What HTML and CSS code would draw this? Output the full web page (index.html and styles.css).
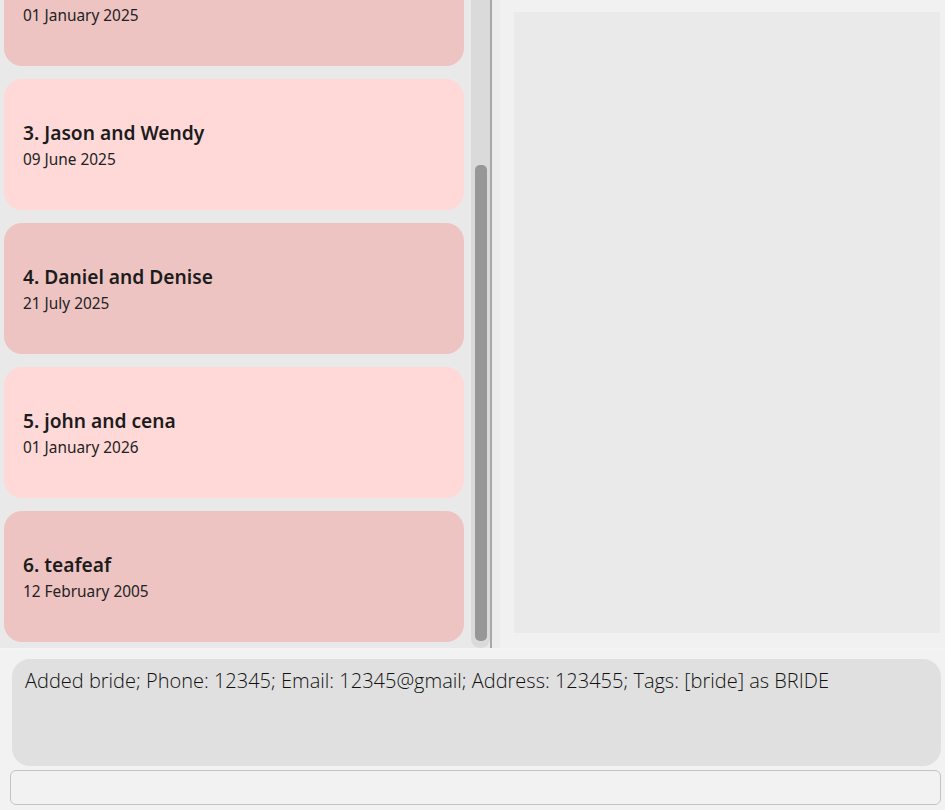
FILE: index.html
```html
<!DOCTYPE html>
<html>
<head>
<meta charset="utf-8">
<link rel="stylesheet" href="styles.css">
</head>
<body>
<div class="app">
  <div class="top">
    <div class="list-panel">
      <div class="list">
        <div class="cards">
          <div class="card dark"><div class="title"></div><div class="date">01 January 2025</div></div>
          <div class="card light"><div class="title">3. Jason and Wendy</div><div class="date">09 June 2025</div></div>
          <div class="card dark"><div class="title">4. Daniel and Denise</div><div class="date">21 July 2025</div></div>
          <div class="card light"><div class="title">5. john and cena</div><div class="date">01 January 2026</div></div>
          <div class="card dark"><div class="title">6. teafeaf</div><div class="date">12 February 2005</div></div>
        </div>
      </div>
      <div class="track"><div class="thumb"></div></div>
    </div>
    <div class="divider"></div>
    <div class="gutter"></div>
    <div class="detail-panel">
      <div class="detail-box"></div>
    </div>
  </div>
  <div class="result-wrap">
    <div class="result">Added bride; Phone: 12345; Email: 12345@gmail; Address: 123455; Tags: [bride] as BRIDE</div>
  </div>
  <div class="command-wrap">
    <div class="command"></div>
  </div>
</div>
</body>
</html>
```
FILE: styles.css
```css
* { box-sizing: border-box; }
html, body { margin: 0; padding: 0; }
body {
  background: #f2f2f2;
  font-family: "Noto Sans", "Open Sans", sans-serif;
  color: #1f1f1f;
  width: 945px;
  height: 810px;
  overflow: hidden;
}
.app { display: flex; flex-direction: column; height: 810px; }
.top { display: flex; height: 648px; }
.list-panel {
  width: 490px;
  background: #e9e9e9;
  display: flex;
  overflow: hidden;
}
.list { width: 471px; overflow: hidden; }
.cards { margin-top: -65px; padding-left: 4px; }
.card {
  width: 460px;
  height: 131px;
  border-radius: 18px;
  margin-bottom: 13px;
  padding: 41px 0 0 19px;
}
.card.dark { background: #eec4c2; }
.card.light { background: #ffd9d8; }
.title {
  font-size: 19.2px;
  font-weight: 600;
  line-height: 26px;
  height: 26px;
  color: #1c1c1c;
}
.date {
  font-size: 15.4px;
  line-height: 20px;
  margin-top: 4px;
  color: #222;
}
.track {
  width: 19px;
  height: 648px;
  background: #dadada;
  border-radius: 0 0 9px 9px;
  padding: 165px 3px 7px 4px;
}
.thumb {
  width: 12px;
  height: 476px;
  background: #979797;
  border-radius: 5px;
}
.divider { width: 2px; background: #a8a8a8; }
.gutter { width: 8px; background: #ececec; }
.detail-panel {
  flex: 1;
  background: #f1f1f1;
  padding: 12px 5px 15px 14px;
}
.detail-box { background: #eaeaea; height: 100%; }
.result-wrap {
  height: 122px;
  padding: 10px 4px 4px 12px;
  border-top: 1px solid #f4f4f4;
}
.result {
  height: 107px;
  background: #e0e0e0;
  border-radius: 18px;
  padding: 9px 13px;
  font-family: "Open Sans", sans-serif;
  font-weight: 300;
  font-size: 20px;
  line-height: 26px;
  color: #111;
}
.command-wrap { padding: 0 4px 0 10px; }
.command {
  height: 35px;
  background: #f2f2f2;
  border: 1px solid #c4c4c4;
  border-radius: 6px;
}
```
